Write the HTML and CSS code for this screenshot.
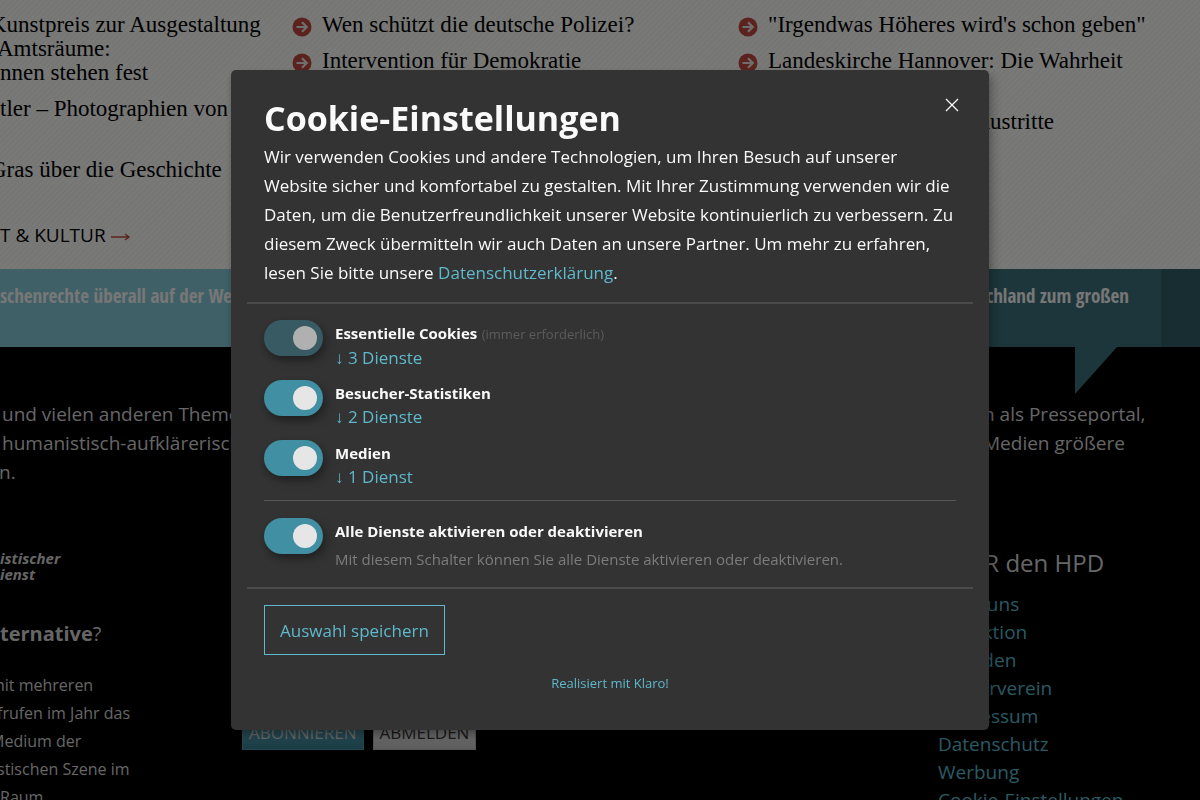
FILE: index.html
```html
<!DOCTYPE html>
<html lang="de">
<head>
    <meta charset="UTF-8">
    <meta name="viewport" content="width=device-width, initial-scale=1.0">
    <title>hpd</title>
    <link rel="stylesheet" href="styles.css">
</head>
<body>
    <svg class="sprite" aria-hidden="true">
        <symbol id="arrow" viewBox="0 0 20 20">
            <circle cx="10" cy="10" r="9.5" fill="#b9463c"/>
            <path d="M4.5 10h10M10 5.2l4.8 4.8-4.8 4.8" fill="none" stroke="#ddd" stroke-width="2.2"/>
        </symbol>
    </svg>

    <main class="topics">
        <div class="topic">
            <ul class="headlines">
                <li><span class="bleed">Kunstpreis zur Ausgestaltung</span><span class="bleed-small">Amtsräume:</span><span>nnen stehen fest</span></li>
                <li class="two-lines">tler – Photographien von</li>
                <li class="two-lines"><span class="bleed">Gras über die Geschichte</span></li>
            </ul>
            <a class="more" href="#">T &amp; KULTUR <svg width="20" height="10" viewBox="0 0 20 10"><path d="M0 5h18M14 2l4 3-4 3" fill="none" stroke="#b9463c" stroke-width="1.4"/></svg></a>
        </div>
        <div class="topic">
            <ul class="headlines icons">
                <li><svg class="icon"><use href="#arrow"/></svg>Wen schützt die deutsche Polizei?</li>
                <li><svg class="icon"><use href="#arrow"/></svg>Intervention für Demokratie</li>
            </ul>
        </div>
        <div class="topic">
            <ul class="headlines icons">
                <li><svg class="icon"><use href="#arrow"/></svg>"Irgendwas Höheres wird's schon geben"</li>
                <li class="two-lines"><svg class="icon"><use href="#arrow"/></svg>Landeskirche Hannover: Die Wahrheit</li>
                <li class="line-end">austritte</li>
            </ul>
        </div>
    </main>

    <section class="ribbon">
        <p class="ribbon-left">schenrechte überall auf der We</p>
        <p class="ribbon-right">chland zum großen</p>
        <div class="ribbon-edge"></div>
    </section>

    <footer class="footer">
        <div class="intro">
            <p>und vielen anderen Themen<br>humanistisch-aufklärerisch<br><span class="bleed-small">n.</span></p>
            <p>n als Presseportal,<br>Medien größere</p>
        </div>
        <div class="footer-columns">
            <div class="about">
                <p class="logo">istischer<br>ienst</p>
                <h3><b>ternative</b>?</h3>
                <p class="about-text">
                    <span class="bleed">mit mehreren</span>
                    <span class="bleed-small">frufen im Jahr das</span>
                    <span class="bleed">Medium der</span>
                    <span class="bleed-small">stischen Szene im</span>
                    <span>Raum</span>
                </p>
            </div>
            <div class="newsletter">
                <button class="subscribe">ABONNIEREN</button>
                <button class="unsubscribe">ABMELDEN</button>
            </div>
            <nav class="links">
                <h2>ÜBER den HPD</h2>
                <ul>
                    <li><a href="#">Über uns</a></li>
                    <li><a href="#">Redaktion</a></li>
                    <li><a href="#">Spenden</a></li>
                    <li><a href="#">Förderverein</a></li>
                    <li><a href="#">Impressum</a></li>
                    <li><a href="#">Datenschutz</a></li>
                    <li><a href="#">Werbung</a></li>
                    <li><a href="#">Cookie-Einstellungen</a></li>
                </ul>
            </nav>
        </div>
    </footer>

    <div class="cookie-modal">
        <div class="modal" role="dialog" aria-labelledby="modal-title">
            <div class="modal-header">
                <button class="close" aria-label="Schließen">
                    <svg width="14" height="14" viewBox="0 0 14 14"><path d="M1 1l12 12M13 1L1 13" stroke="#fafafa" stroke-width="1.3"/></svg>
                </button>
                <h1 id="modal-title">Cookie-Einstellungen</h1>
                <p>Wir verwenden Cookies und andere Technologien, um Ihren Besuch auf unserer Website sicher und komfortabel zu gestalten. Mit Ihrer Zustimmung verwenden wir die Daten, um die Benutzerfreundlichkeit unserer Website kontinuierlich zu verbessern. Zu diesem Zweck übermitteln wir auch Daten an unsere Partner. Um mehr zu erfahren, lesen Sie bitte unsere <a href="#">Datenschutzerklärung</a>.</p>
            </div>
            <div class="modal-body">
                <ul class="purposes">
                    <li class="purpose">
                        <input class="switch" type="checkbox" id="essential" checked disabled>
                        <div class="purpose-text">
                            <label for="essential">Essentielle Cookies</label> <span class="required">(immer erforderlich)</span>
                            <a class="services" href="#">↓ 3 Dienste</a>
                        </div>
                    </li>
                    <li class="purpose">
                        <input class="switch" type="checkbox" id="statistics" checked>
                        <div class="purpose-text">
                            <label for="statistics">Besucher-Statistiken</label>
                            <a class="services" href="#">↓ 2 Dienste</a>
                        </div>
                    </li>
                    <li class="purpose">
                        <input class="switch" type="checkbox" id="media" checked>
                        <div class="purpose-text">
                            <label for="media">Medien</label>
                            <a class="services" href="#">↓ 1 Dienst</a>
                        </div>
                    </li>
                    <li class="purpose toggle-all">
                        <input class="switch" type="checkbox" id="all" checked>
                        <div class="purpose-text">
                            <label for="all">Alle Dienste aktivieren oder deaktivieren</label>
                            <p>Mit diesem Schalter können Sie alle Dienste aktivieren oder deaktivieren.</p>
                        </div>
                    </li>
                </ul>
            </div>
            <div class="modal-footer">
                <button class="save">Auswahl speichern</button>
                <a class="powered-by" href="#">Realisiert mit Klaro!</a>
            </div>
        </div>
    </div>
</body>
</html>
```

FILE: styles.css
```css
* {
    box-sizing: border-box;
}
body {
    margin: 0;
    height: 100vh;
    overflow: hidden;
    background-color: #000;
    font-family: "Open Sans", "Noto Sans", sans-serif;
}
h1, h2, h3, p, ul {
    margin: 0;
    padding: 0;
}
ul {
    list-style: none;
}
a {
    color: #57b3c6;
    text-decoration: none;
}
button {
    font-family: inherit;
    cursor: pointer;
}
.sprite {
    display: none;
}
.bleed {
    margin-left: -10px;
}
.bleed-small {
    margin-left: -3px;
}

/* Topics */
.topics {
    display: grid;
    grid-template-columns: 292px 446px 1fr;
    height: 269px;
    padding-top: 13px;
    background: repeating-linear-gradient(135deg, #ececea 0 2px, #f3f3f1 2px 4px);
}
.headlines {
    font-family: "Liberation Serif", serif;
    font-size: 23px;
    line-height: 24px;
    white-space: nowrap;
}
.headlines li {
    margin-bottom: 12px;
}
.headlines li > span {
    display: block;
}
.headlines .two-lines {
    height: 49px;
}
.icons li {
    display: flex;
    gap: 10px;
}
.icons .line-end {
    justify-content: flex-end;
    width: 316px;
}
.icon {
    width: 20px;
    height: 20px;
    margin-top: 4px;
}
.more {
    display: block;
    margin-top: 16px;
    color: #000;
    font-size: 19px;
    line-height: 24px;
}

/* Ribbon */
.ribbon {
    display: grid;
    grid-template-columns: 1fr 361px 39px;
    height: 78px;
    color: #eee;
    font-family: "Open Sans Condensed", "Liberation Sans Narrow", sans-serif;
    font-size: 19px;
    font-weight: bold;
    line-height: 26px;
}
.ribbon p {
    padding-top: 14px;
}
.ribbon-left {
    background-color: #7ec0cc;
}
.ribbon-right {
    position: relative;
    padding-right: 32px;
    background-color: #3a6c76;
    text-align: right;
}
.ribbon-right::after {
    content: "";
    position: absolute;
    top: 100%;
    right: 44px;
    width: 42px;
    height: 47px;
    background-color: #3a6c76;
    clip-path: polygon(0 0, 100% 0, 0 100%);
}
.ribbon-edge {
    background-color: #305a64;
}

/* Footer */
.footer {
    padding-top: 53px;
    color: #ccc;
}
.intro {
    display: grid;
    grid-template-columns: 1fr 217px;
    padding-left: 2px;
    font-size: 19px;
    line-height: 29px;
}
.footer-columns {
    display: grid;
    grid-template-columns: 242px 1fr 262px;
    margin-top: 58px;
}
.logo {
    margin-top: 5px;
    font-size: 15px;
    font-style: italic;
    font-weight: bold;
    line-height: 16px;
}
.about h3 {
    margin-top: 38px;
    font-size: 20px;
    font-weight: normal;
    line-height: 28px;
}
.about-text {
    margin-top: 23px;
    font-size: 16px;
    line-height: 28px;
}
.about-text span {
    display: block;
}
.newsletter {
    display: flex;
    gap: 9px;
    align-items: flex-start;
    padding-top: 169px;
}
.newsletter button {
    height: 36px;
    padding: 0 6px;
    border: 1px solid #4a8f9e;
    font-size: 17px;
}
.newsletter .subscribe {
    background: linear-gradient(#5fa9ba, #35798a);
    color: #ccc;
}
.newsletter .unsubscribe {
    background: linear-gradient(#eee, #bbb);
    border-color: #aaa;
    color: #333;
}
.links h2 {
    padding-bottom: 9px;
    font-size: 24px;
    font-weight: normal;
    line-height: 36px;
}
.links {
    font-size: 19px;
    line-height: 28px;
}

/* Cookie modal */
.cookie-modal {
    position: fixed;
    inset: 0;
    display: flex;
    align-items: center;
    justify-content: center;
    padding-left: 20px;
    background-color: rgba(0, 0, 0, 0.5);
}
.modal {
    width: 758px;
    border-radius: 5px;
    background-color: #333;
    box-shadow: 0 4px 6px rgba(0, 0, 0, 0.2), 5px 5px 10px rgba(0, 0, 0, 0.2);
    color: #fafafa;
}
.modal a {
    color: #5fb8cb;
}
.modal-header,
.modal-body,
.modal-footer {
    margin: 0 16px;
    padding: 16px 17px;
}
.modal-header {
    position: relative;
    padding-top: 25px;
    padding-bottom: 15px;
    border-bottom: 2px solid #4b4b4b;
    font-size: 17px;
    line-height: 29px;
}
.modal-header h1 {
    font-size: 34px;
    line-height: 47px;
}
.close {
    position: absolute;
    top: 28px;
    right: 14px;
    width: 14px;
    height: 14px;
    padding: 0;
    border: 0;
    background: none;
}
.close svg {
    display: block;
}
.modal-body {
    padding-bottom: 12px;
}
.purpose {
    display: flex;
    gap: 12px;
    min-height: 60px;
    font-size: 17px;
    line-height: 24px;
}
.purpose-text {
    padding-top: 1px;
}
.purpose label {
    font-size: 15px;
    font-weight: bold;
}
.purpose p {
    color: #7c7c7c;
    font-size: 15px;
    line-height: 32px;
}
.required {
    color: #5c5c5c;
    font-size: 13px;
}
.services {
    display: block;
}
.switch {
    appearance: none;
    flex: none;
    width: 59px;
    height: 36px;
    margin: 0;
    padding: 6px;
    border-radius: 18px;
    background-color: #418fa2;
    box-shadow: 0 4px 6px rgba(0, 0, 0, 0.2), 5px 5px 10px rgba(0, 0, 0, 0.2);
}
.switch::before {
    content: "";
    display: block;
    width: 24px;
    height: 24px;
    margin-left: auto;
    border-radius: 50%;
    background-color: #e6e6e6;
}
.switch:disabled {
    background-color: #385b63;
}
.switch:disabled::before {
    background-color: #b0b0b0;
}
.toggle-all {
    padding-top: 17px;
    border-top: 1px solid #555;
}
.modal-footer {
    display: flex;
    flex-direction: column;
    align-items: flex-start;
    border-top: 2px solid #4b4b4b;
    padding-bottom: 36px;
}
.save {
    height: 50px;
    padding: 0 15px;
    border: 1px solid #5fb8cb;
    background: none;
    color: #5fb8cb;
    font-size: 17px;
}
.powered-by {
    align-self: center;
    margin-top: 17px;
    font-size: 13px;
    line-height: 22px;
}
```
